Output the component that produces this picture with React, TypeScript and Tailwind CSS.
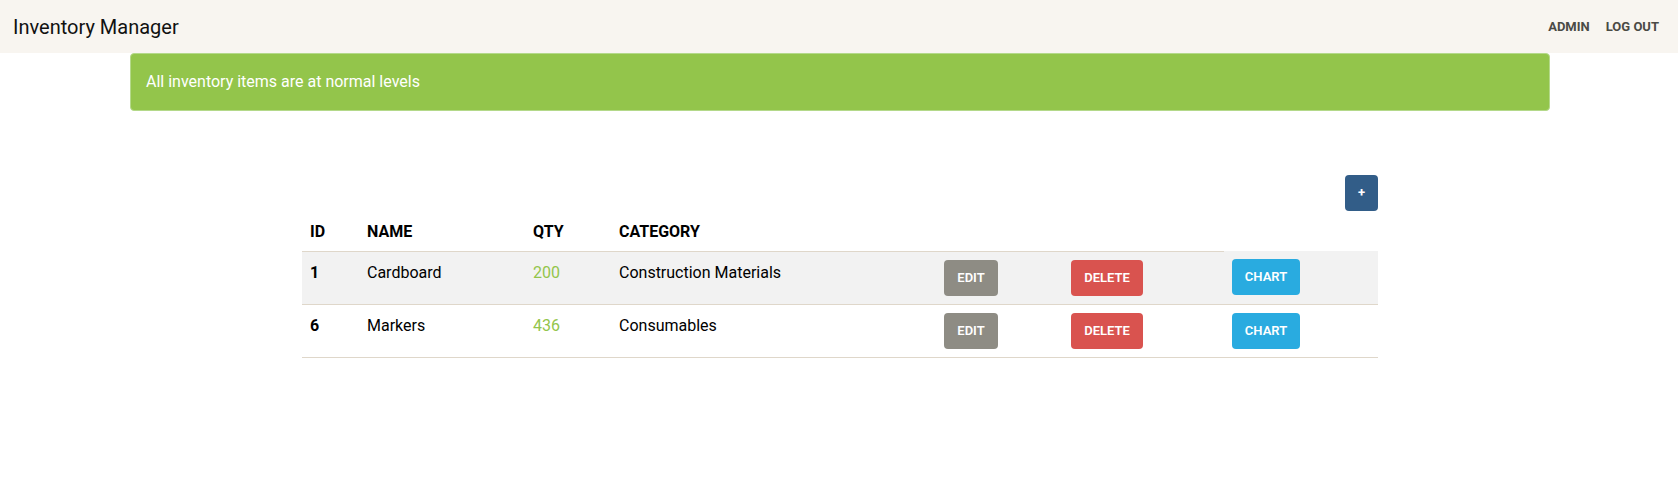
import React from 'react';

const items = [
  { id: 1, name: 'Cardboard', qty: 200, category: 'Construction Materials' },
  { id: 6, name: 'Markers', qty: 436, category: 'Consumables' },
];

export default function App() {
  return (
    <div className="min-h-[479px] bg-white text-black" style={{ fontFamily: 'Roboto, "Liberation Sans", sans-serif' }}>
      {/* navbar */}
      <nav className="h-[53px] bg-[#f8f5f0] flex items-center justify-between pl-[13px] pr-[19px]">
        <span className="text-[20px] text-[#111] leading-none">Inventory Manager</span>
        <div className="flex items-center gap-4 text-[13px] font-bold text-[#4a4a45]">
          <a>ADMIN</a>
          <a>LOG OUT</a>
        </div>
      </nav>

      <div className="pl-[2px]">
        {/* status alert */}
        <div className="mx-auto w-[1420px] h-[58px] flex items-center pl-[15px] bg-[#93c54b] border border-[#b4d98a] rounded text-white text-[16px]">
          All inventory items are at normal levels
        </div>

        <div className="mx-auto w-[1076px] mt-[64px]">
          <div className="flex justify-end">
            <button className="h-[36px] w-[33px] rounded bg-[#325d88] text-white text-[13px] font-bold flex items-center justify-center">
              +
            </button>
          </div>

          <table className="w-full table-fixed border-collapse text-[16px]">
            <colgroup>
              <col className="w-[57px]" />
              <col className="w-[166px]" />
              <col className="w-[86px]" />
              <col className="w-[325px]" />
              <col className="w-[127px]" />
              <col className="w-[161px]" />
              <col className="w-[154px]" />
            </colgroup>
            <thead>
              <tr className="text-left font-bold">
                <th className="px-2 pt-[9px] pb-[7px] h-[40px] leading-[23px] border-b border-[#dfd7ca]">ID</th>
                <th className="px-2 pt-[9px] pb-[7px] leading-[23px] border-b border-[#dfd7ca]">NAME</th>
                <th className="px-2 pt-[9px] pb-[7px] leading-[23px] border-b border-[#dfd7ca]">QTY</th>
                <th className="px-2 pt-[9px] pb-[7px] leading-[23px] border-b border-[#dfd7ca]">CATEGORY</th>
                <th className="p-2 border-b border-[#dfd7ca]"></th>
                <th className="p-2 border-b border-[#dfd7ca]"></th>
              </tr>
            </thead>
            <tbody>
              {items.map((it, i) => (
                <tr key={it.id} className={i % 2 === 0 ? 'bg-[#f2f2f2]' : ''}>
                  <td className="p-2 align-top leading-[25px] font-bold border-b border-[#dfd7ca]">{it.id}</td>
                  <td className="p-2 align-top leading-[25px] border-b border-[#dfd7ca]">{it.name}</td>
                  <td className="p-2 align-top leading-[25px] text-[#93c54b] border-b border-[#dfd7ca]">{it.qty}</td>
                  <td className="p-2 align-top leading-[25px] border-b border-[#dfd7ca]">{it.category}</td>
                  <td className="p-2 align-top border-b border-[#dfd7ca]">
                    <button className="h-[36px] w-[54px] rounded bg-[#8e8c84] text-white text-[13px] font-semibold">EDIT</button>
                  </td>
                  <td className="p-2 align-top border-b border-[#dfd7ca]">
                    <button className="h-[36px] w-[72px] rounded bg-[#d9534f] text-white text-[13px] font-semibold">DELETE</button>
                  </td>
                  <td className="p-2 align-top border-b border-[#dfd7ca]">
                    <button className="h-[36px] w-[68px] rounded bg-[#29abe0] text-white text-[13px] font-semibold">CHART</button>
                  </td>
                </tr>
              ))}
            </tbody>
          </table>
        </div>
      </div>
    </div>
  );
}
